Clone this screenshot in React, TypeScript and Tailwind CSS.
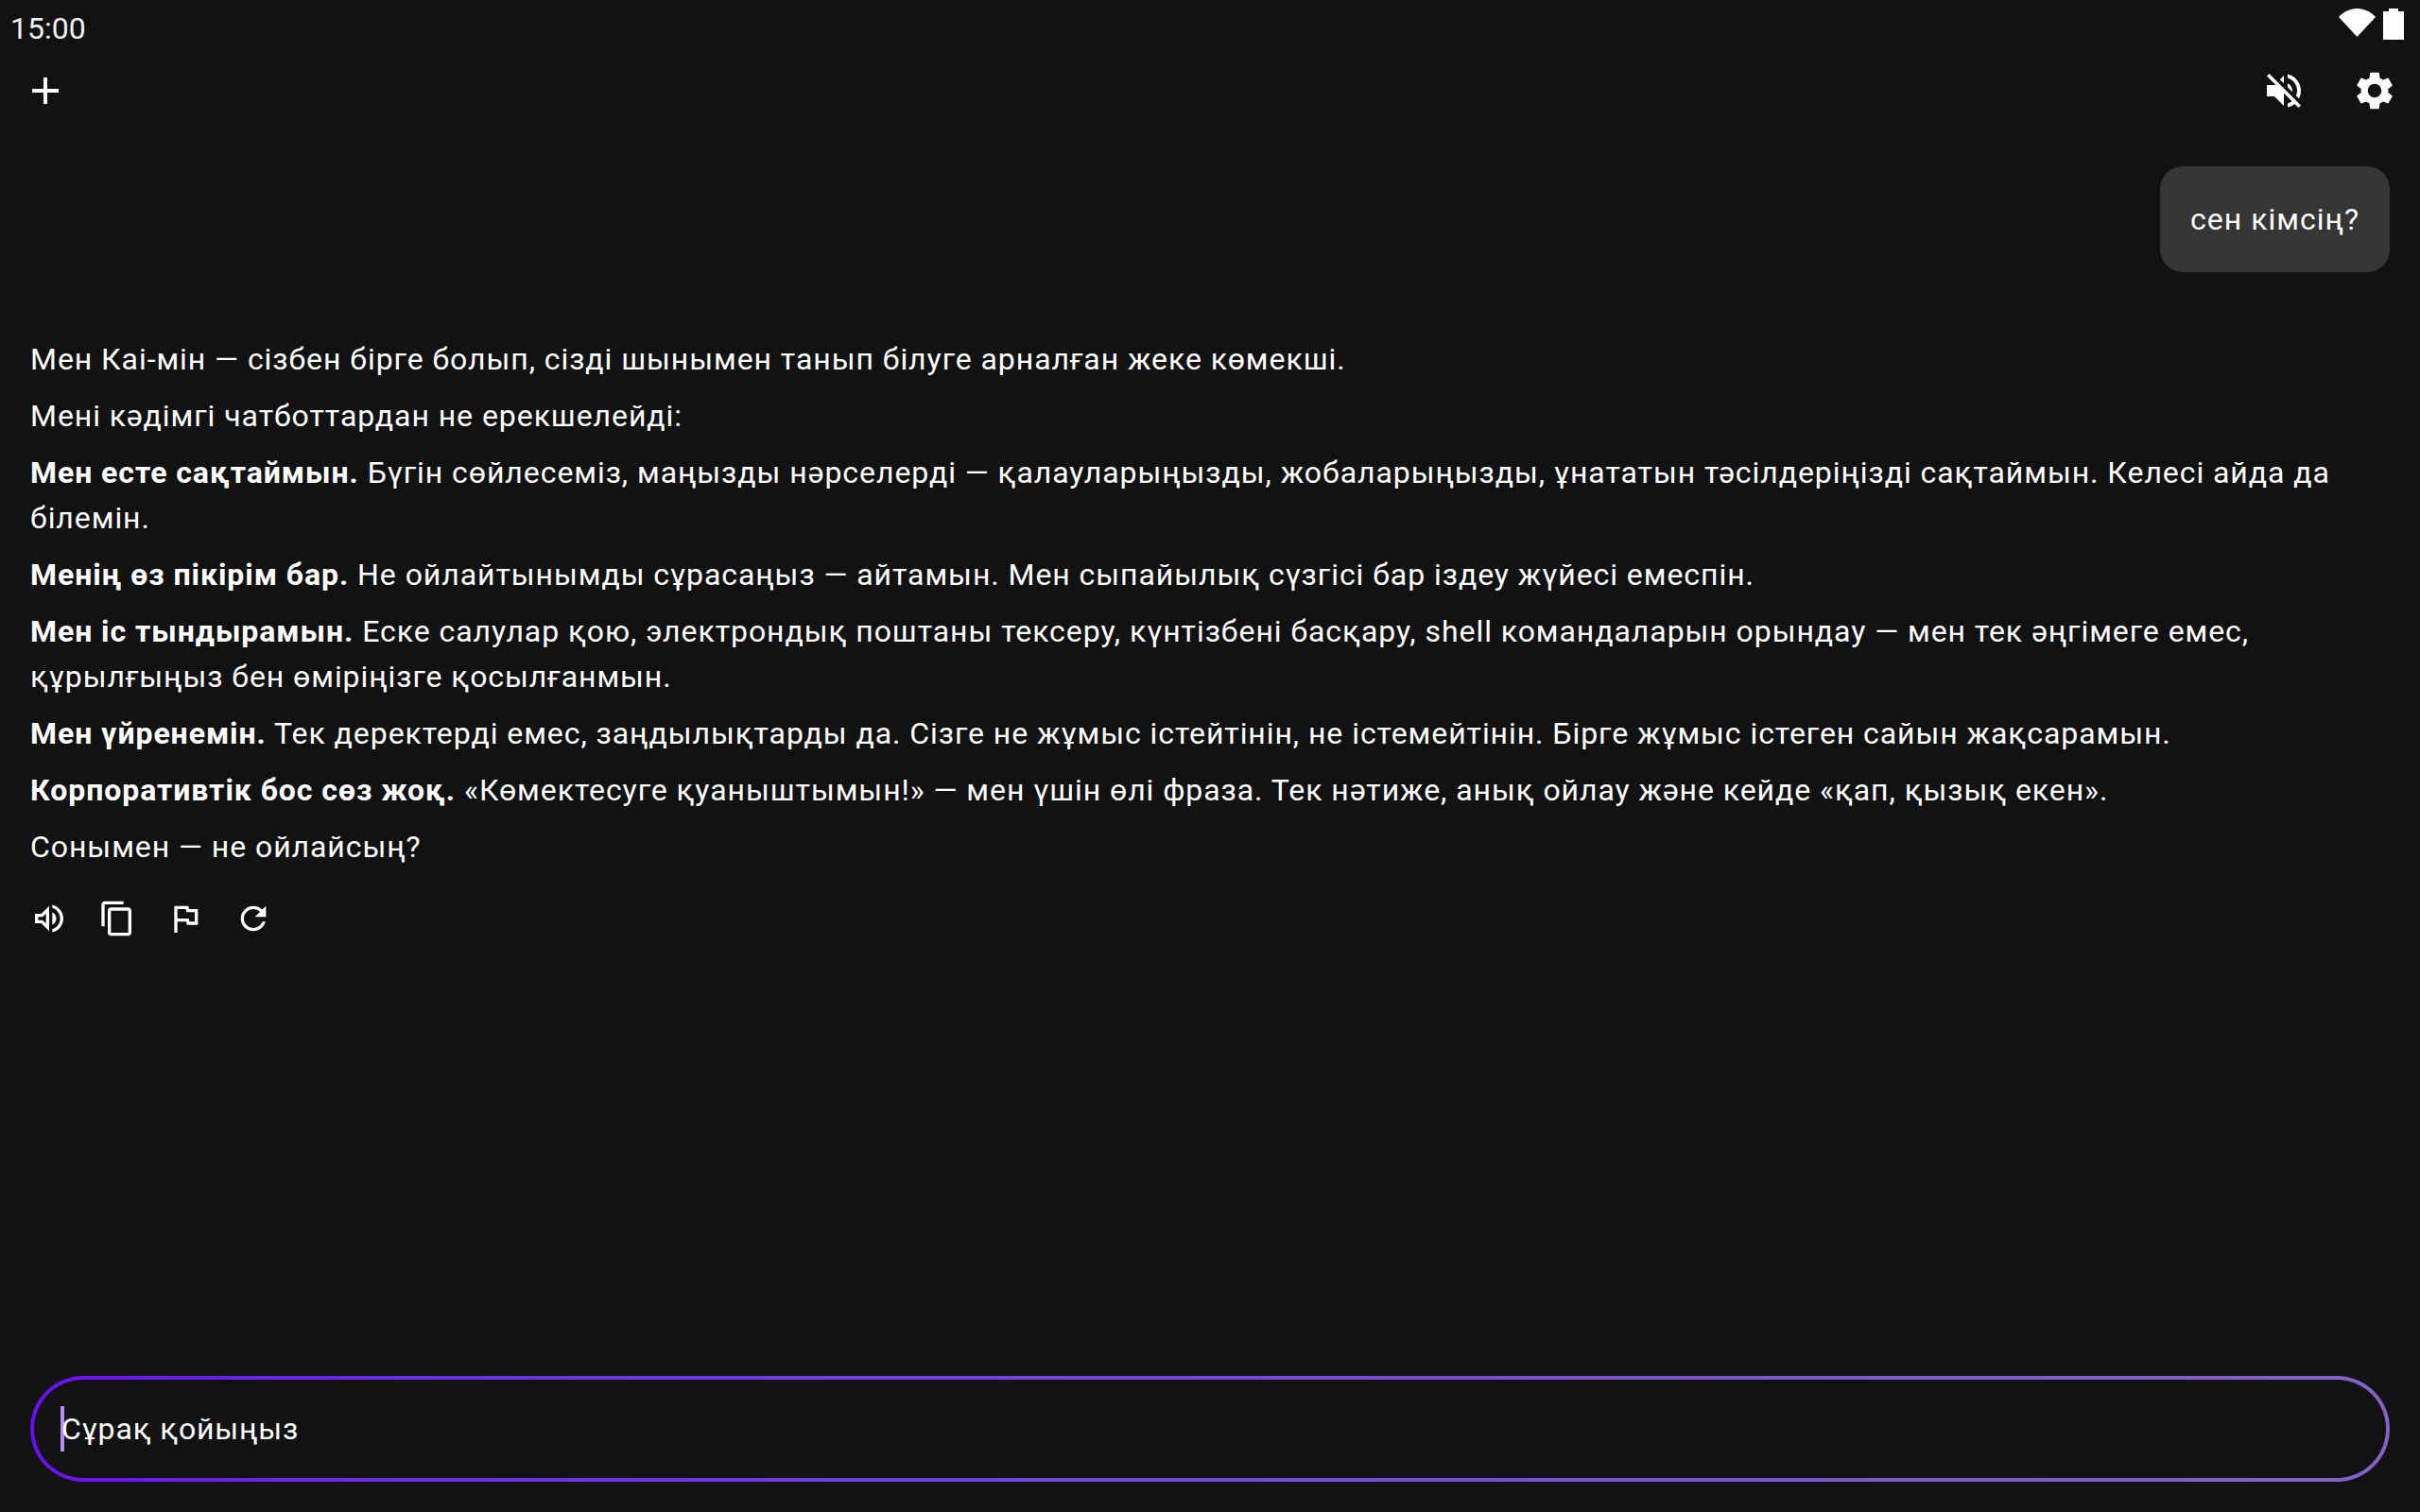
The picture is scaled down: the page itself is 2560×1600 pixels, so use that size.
const paragraphs: { bold?: string; text: string }[] = [
  { text: "Мен Кai-мін — сізбен бірге болып, сізді шынымен танып білуге арналған жеке көмекші." },
  { text: "Мені кәдімгі чатботтардан не ерекшелейді:" },
  {
    bold: "Мен есте сақтаймын.",
    text: " Бүгін сөйлесеміз, маңызды нәрселерді — қалауларыңызды, жобаларыңызды, ұнататын тәсілдеріңізді сақтаймын. Келесі айда да білемін.",
  },
  {
    bold: "Менің өз пікірім бар.",
    text: " Не ойлайтынымды сұрасаңыз — айтамын. Мен сыпайылық сүзгісі бар іздеу жүйесі емеспін.",
  },
  {
    bold: "Мен іс тындырамын.",
    text: " Еске салулар қою, электрондық поштаны тексеру, күнтізбені басқару, shell командаларын орындау — мен тек әңгімеге емес, құрылғыңыз бен өміріңізге қосылғанмын.",
  },
  {
    bold: "Мен үйренемін.",
    text: " Тек деректерді емес, заңдылықтарды да. Сізге не жұмыс істейтінін, не істемейтінін. Бірге жұмыс істеген сайын жақсарамын.",
  },
  {
    bold: "Корпоративтік бос сөз жоқ.",
    text: " «Көмектесуге қуаныштымын!» — мен үшін өлі фраза. Тек нәтиже, анық ойлау және кейде «қап, қызық екен».",
  },
  { text: "Сонымен — не ойлайсың?" },
];

const actionIcons = [
  "M3 9v6h4l5 5V4L7 9H3zm7-.17v6.34L7.83 13H5v-2h2.83L10 8.83zM16.5 12c0-1.77-1.02-3.29-2.5-4.03v8.05c1.48-.73 2.5-2.25 2.5-4.02zM14 3.23v2.06c2.89.86 5 3.54 5 6.71s-2.11 5.85-5 6.71v2.06c4.01-.91 7-4.49 7-8.77s-2.99-7.86-7-8.77z",
  "M16 1H4c-1.1 0-2 .9-2 2v14h2V3h12V1zm3 4H8c-1.1 0-2 .9-2 2v14c0 1.1.9 2 2 2h11c1.1 0 2-.9 2-2V7c0-1.1-.9-2-2-2zm0 16H8V7h11v14z",
  "M12.36 6l.4 2H18v6h-3.36l-.4-2H7V6h5.36M14 4H5v17h2v-7h5.6l.4 2h7V6h-5.6L14 4z",
  "M17.65 6.35C16.2 4.9 14.21 4 12 4c-4.42 0-7.99 3.58-7.99 8s3.57 8 7.99 8c3.73 0 6.84-2.55 7.73-6h-2.08c-.82 2.33-3.04 4-5.65 4-3.31 0-6-2.69-6-6s2.69-6 6-6c1.66 0 3.14.69 4.22 1.78L13 11h7V4l-2.35 2.35z",
];

function Icon({ d, className }: { d: string; className: string }) {
  return (
    <svg viewBox="0 0 24 24" fill="#fff" className={className}>
      <path d={d} />
    </svg>
  );
}

export default function App() {
  return (
    <div
      className="flex h-screen w-full flex-col overflow-hidden bg-[#121212] text-[32px] leading-[48px] tracking-[0.94px] text-white"
      style={{ fontFamily: "Roboto, sans-serif" }}
    >
      {/* status bar */}
      <div className="flex h-[48px] justify-between pl-[11px] pr-[17px]">
        <span className="mt-[6px] text-[32px] leading-[48px] tracking-normal text-[#f2f2f2]">15:00</span>
        <div className="flex items-start gap-[8px] pt-[9px]">
          <svg viewBox="0 0 39 30" className="h-[30px] w-[39px]" fill="#fff">
            <path d="M0 9C5 3.5 12 0 19.5 0S34 3.5 39 9L19.5 30z" />
          </svg>
          <svg viewBox="0 0 22 33" className="h-[33px] w-[22px]" fill="#fff">
            <path d="M0 33V3h6V0h10v3h6v30z" />
          </svg>
        </div>
      </div>

      {/* top bar */}
      <div className="flex h-[96px] items-center justify-between px-[24px]">
        <Icon d="M19 13h-6v6h-2v-6H5v-2h6V5h2v6h6v2z" className="h-[48px] w-[48px]" />
        <div className="flex gap-[48px]">
          <Icon
            d="M16.5 12c0-1.77-1.02-3.29-2.5-4.03v2.21l2.45 2.45c.03-.2.05-.41.05-.63zm2.5 0c0 .94-.2 1.82-.54 2.64l1.51 1.51C20.63 14.91 21 13.5 21 12c0-4.28-2.99-7.86-7-8.77v2.06c2.89.86 5 3.54 5 6.71zM4.27 3L3 4.27 7.73 9H3v6h4l5 5v-6.73l4.25 4.25c-.67.52-1.42.93-2.25 1.18v2.06c1.38-.31 2.63-.95 3.69-1.81L19.73 21 21 19.73l-9-9L4.27 3zM12 4L9.91 6.09 12 8.18V4z"
            className="h-[48px] w-[48px]"
          />
          <Icon
            d="M19.14 12.94c.04-.3.06-.61.06-.94 0-.32-.02-.64-.07-.94l2.03-1.58c.18-.14.23-.41.12-.61l-1.92-3.32c-.12-.22-.37-.29-.59-.22l-2.39.96c-.5-.38-1.03-.7-1.62-.94l-.36-2.54c-.04-.24-.24-.41-.48-.41h-3.84c-.24 0-.43.17-.47.41l-.36 2.54c-.59.24-1.13.57-1.62.94l-2.39-.96c-.22-.08-.47 0-.59.22L2.74 8.87c-.12.21-.08.47.12.61l2.03 1.58c-.05.3-.09.63-.09.94s.02.64.07.94l-2.03 1.58c-.18.14-.23.41-.12.61l1.92 3.32c.12.22.37.29.59.22l2.39-.96c.5.38 1.03.7 1.62.94l.36 2.54c.05.24.24.41.48.41h3.84c.24 0 .44-.17.47-.41l.36-2.54c.59-.24 1.13-.56 1.62-.94l2.39.96c.22.08.47 0 .59-.22l1.92-3.32c.12-.22.07-.47-.12-.61l-2.01-1.58zM12 15.6c-1.98 0-3.6-1.62-3.6-3.6s1.62-3.6 3.6-3.6 3.6 1.62 3.6 3.6-1.62 3.6-3.6 3.6z"
            className="h-[48px] w-[48px]"
          />
        </div>
      </div>

      {/* user message */}
      <div className="mt-[32px] flex justify-end pr-[32px]">
        <div className="rounded-[24px] bg-[#363636] p-[32px] tracking-[1px]">сен кімсің?</div>
      </div>

      {/* reply */}
      <div className="mt-[68px] flex flex-col gap-[12px] px-[32px]">
        {paragraphs.map((p) => (
          <p key={p.text}>
            {p.bold && <strong className="font-bold">{p.bold}</strong>}
            <span>{p.text}</span>
          </p>
        ))}
      </div>

      <div className="mt-[32px] flex gap-[32px] px-[32px]">
        {actionIcons.map((d) => (
          <Icon key={d} d={d} className="h-[40px] w-[40px]" />
        ))}
      </div>

      <div className="flex-1" />

      {/* input */}
      <div className="mx-[32px] mb-[32px] rounded-[56px] bg-gradient-to-r from-[#6a0ff0] to-[#8462c8] p-[4px]">
        <div className="flex h-[104px] items-center rounded-[52px] bg-[#121212] pl-[28px]">
          <span className="h-[48px] w-[4px] bg-[#b98cf5]" />
          <span className="ml-[-3px] tracking-[0.85px]">Сұрақ қойыңыз</span>
        </div>
      </div>
    </div>
  );
}
